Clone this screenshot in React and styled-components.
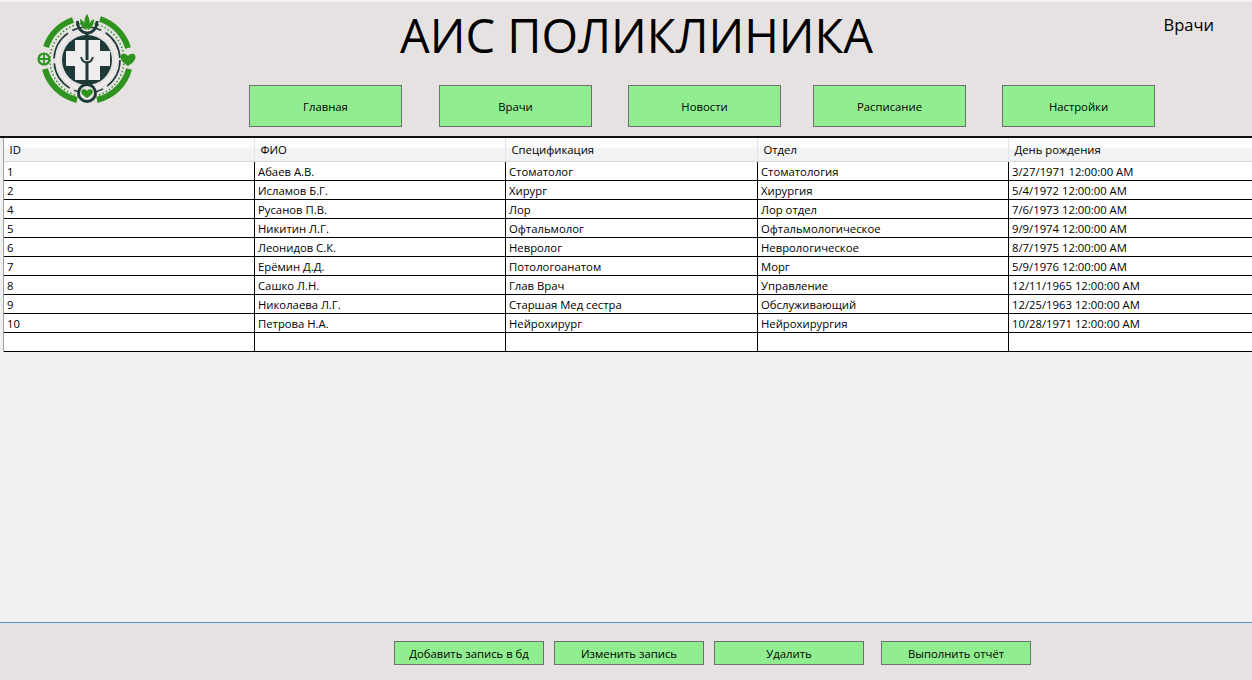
import React from "react";
import styled, { createGlobalStyle } from "styled-components";

const Global = createGlobalStyle`
  html, body { margin: 0; padding: 0; height: 100%; overflow: hidden; }
  body { background: #f0f0f0; font-family: "Open Sans", "Noto Sans", sans-serif; color: #000; }
  #root { height: 100%; }
`;

const Page = styled.div`
  width: 1252px;
  height: 680px;
  display: flex;
  flex-direction: column;
  padding-top: 2px;
  box-sizing: border-box;
  background: #f0f0f0;
`;

const Header = styled.header`
  height: 134px;
  flex: none;
  display: flex;
  background: #e6e2e2;
`;

const LogoBox = styled.div`
  width: 249px;
  flex: none;
  padding-left: 20px;
  box-sizing: border-box;
`;

const HeaderMain = styled.div`
  flex: 1;
  display: flex;
  flex-direction: column;
`;

const TitleRow = styled.div`
  height: 83px;
  display: flex;
  align-items: flex-start;
`;

const Title = styled.h1`
  margin: 0 0 0 151px;
  font-size: 47px;
  font-weight: 400;
  line-height: 66px;
  white-space: nowrap;
`;

const PageName = styled.div`
  margin: 10px 38px 0 auto;
  font-size: 16.5px;
  line-height: 26px;
  color: #000;
`;

const Nav = styled.nav`
  display: flex;
`;

const GreenButton = styled.button`
  width: ${(p) => p.$w}px;
  height: ${(p) => p.$h}px;
  margin-left: ${(p) => p.$gap || 0}px;
  flex: none;
  padding: 0;
  background: #90ee90;
  border: 1px solid #707070;
  font-family: inherit;
  font-size: 11.3px;
  color: #000;
`;

const TableArea = styled.main`
  flex: 1;
  border-top: 2px solid #111;
  padding-left: 3px;
  overflow: hidden;
`;

const Grid = styled.table`
  border-collapse: separate;
  border-spacing: 0;
  table-layout: fixed;
  width: 1249px;
  font-size: 11.3px;
  border-left: 1px solid #a0a0a0;
`;

const Th = styled.th`
  height: 24px;
  padding: 0 0 0 5.5px;
  box-sizing: border-box;
  text-align: left;
  font-weight: 400;
  white-space: nowrap;
  background: linear-gradient(#ffffff 0%, #fbfcfd 40%, #f2f3f5 50%, #f1f2f4 100%);
  border-right: 1px solid #e3e4e6;
  border-bottom: 1px solid #d8d8d8;
`;

const Td = styled.td`
  height: 19px;
  padding: 2px 0 0 3px;
  box-sizing: border-box;
  background: #fff;
  white-space: nowrap;
  line-height: 16px;
  border-right: 1px solid #000;
  border-bottom: 1px solid #000;

  &:last-child { border-right: 0; }
`;

const Footer = styled.footer`
  height: 58px;
  flex: none;
  display: flex;
  box-sizing: border-box;
  padding: 18px 0 0 394px;
  background: #e6e2e2;
  border-top: 1px solid #5d8fc9;
`;

const Logo = () => (
  <svg width="130" height="110" viewBox="0 2 130 110" fill="none">
    <g stroke="#2f9320" strokeWidth="6" fill="none">
      <path d="M26 47 A43 43 0 0 1 53 20" />
      <path d="M80 19 A43 43 0 0 1 108 48" />
      <path d="M25 69 A43 43 0 0 0 57 100" />
      <path d="M77 100 A43 43 0 0 0 109 69" />
    </g>
    <circle cx="67" cy="60" r="37" stroke="#2f9320" strokeWidth="1.5" strokeDasharray="1.5 2.2" />
    <circle cx="67" cy="60" r="33" stroke="#1d3a38" strokeWidth="1.6" strokeDasharray="30 5" />
    <circle cx="67" cy="60" r="29" stroke="#f4f2f2" strokeWidth="2" strokeDasharray="2 1.5" />
    <circle cx="67" cy="60" r="25" fill="#1d3a38" />
    <path d="M55 40 H80 V51 H90 V66 H80 V80 H55 V66 H46 V51 H55 Z" fill="#efeded" />
    <path d="M67 32 V60 M67 62 V86" stroke="#1d3a38" strokeWidth="3" />
    <path d="M61 57 Q63 63 67 62 Q71 63 73 57" stroke="#1d3a38" strokeWidth="2" />
    <path d="M57.500 21 C57.500 37 77 37 77 21" stroke="#1d3a38" strokeWidth="2.8" />
    <path d="M67 14 C70 19 71 23 67 30 C63 23 64 19 67 14 Z" fill="#2f9320" />
    <path d="M60 19 C60 24 62 28 66 30 C66 25 64 21 60 19 Z M74 19 C74 24 72 28 68 30 C68 25 70 21 74 19 Z" fill="#2f9320" />
    <circle cx="67" cy="93" r="8.500" fill="#e6e2e2" stroke="#1d3a38" strokeWidth="2.800" />
    <path d="M67 98 C62 95 60.500 92.500 61.500 90.500 C63 88.500 66 89 67 91 C68 89 71 88.500 72.500 90.500 C73.500 92.500 72 95 67 98 Z" fill="#2f9320" />
    <circle cx="24" cy="59" r="5.500" stroke="#2f9320" strokeWidth="2.200" />
    <path d="M24 54 V64 M19 59 H29" stroke="#2f9320" strokeWidth="1.800" />
    <path d="M108 66 C103 63 100.500 60 100.500 57 C100.500 53.500 105 52.500 108 56 C111 52.500 115.500 53.500 115.500 57 C115.500 60 113 63 108 66 Z" fill="#2f9320" />
  </svg>
);

const NAV = [
  ["Главная", 0],
  ["Врачи", 37],
  ["Новости", 36],
  ["Расписание", 32],
  ["Настройки", 36],
];

const ACTIONS = [
  ["Добавить запись в бд", 0],
  ["Изменить запись", 10],
  ["Удалить", 10],
  ["Выполнить отчёт", 17],
];

const COLUMNS = [
  ["ID", 251],
  ["ФИО", 251],
  ["Спецификация", 252],
  ["Отдел", 251],
  ["День рождения", 244],
];

const ROWS = [
  ["1", "Абаев А.В.", "Стоматолог", "Стоматология", "3/27/1971 12:00:00 AM"],
  ["2", "Исламов Б.Г.", "Хирург", "Хирургия", "5/4/1972 12:00:00 AM"],
  ["4", "Русанов П.В.", "Лор", "Лор отдел", "7/6/1973 12:00:00 AM"],
  ["5", "Никитин Л.Г.", "Офтальмолог", "Офтальмологическое", "9/9/1974 12:00:00 AM"],
  ["6", "Леонидов С.К.", "Невролог", "Неврологическое", "8/7/1975 12:00:00 AM"],
  ["7", "Ерёмин Д.Д.", "Потологоанатом", "Морг", "5/9/1976 12:00:00 AM"],
  ["8", "Сашко Л.Н.", "Глав Врач", "Управление", "12/11/1965 12:00:00 AM"],
  ["9", "Николаева Л.Г.", "Старшая Мед сестра", "Обслуживающий", "12/25/1963 12:00:00 AM"],
  ["10", "Петрова Н.А.", "Нейрохирург", "Нейрохирургия", "10/28/1971 12:00:00 AM"],
  ["", "", "", "", ""],
];

export default function App() {
  return (
    <Page>
      <Global />
      <Header>
        <LogoBox>
          <Logo />
        </LogoBox>
        <HeaderMain>
          <TitleRow>
            <Title>АИС ПОЛИКЛИНИКА</Title>
            <PageName>Врачи</PageName>
          </TitleRow>
          <Nav>
            {NAV.map(([label, gap]) => (
              <GreenButton key={label} $w={153} $h={42} $gap={gap}>{label}</GreenButton>
            ))}
          </Nav>
        </HeaderMain>
      </Header>
      <TableArea>
        <Grid>
          <colgroup>
            {COLUMNS.map(([name, w]) => <col key={name} width={w} />)}
          </colgroup>
          <thead>
            <tr>{COLUMNS.map(([name]) => <Th key={name}>{name}</Th>)}</tr>
          </thead>
          <tbody>
            {ROWS.map((row, i) => (
              <tr key={i}>
                {row.map((cell, j) => <Td key={j}>{cell}</Td>)}
              </tr>
            ))}
          </tbody>
        </Grid>
      </TableArea>
      <Footer>
        {ACTIONS.map(([label, gap]) => (
          <GreenButton key={label} $w={150} $h={24} $gap={gap}>{label}</GreenButton>
        ))}
      </Footer>
    </Page>
  );
}
